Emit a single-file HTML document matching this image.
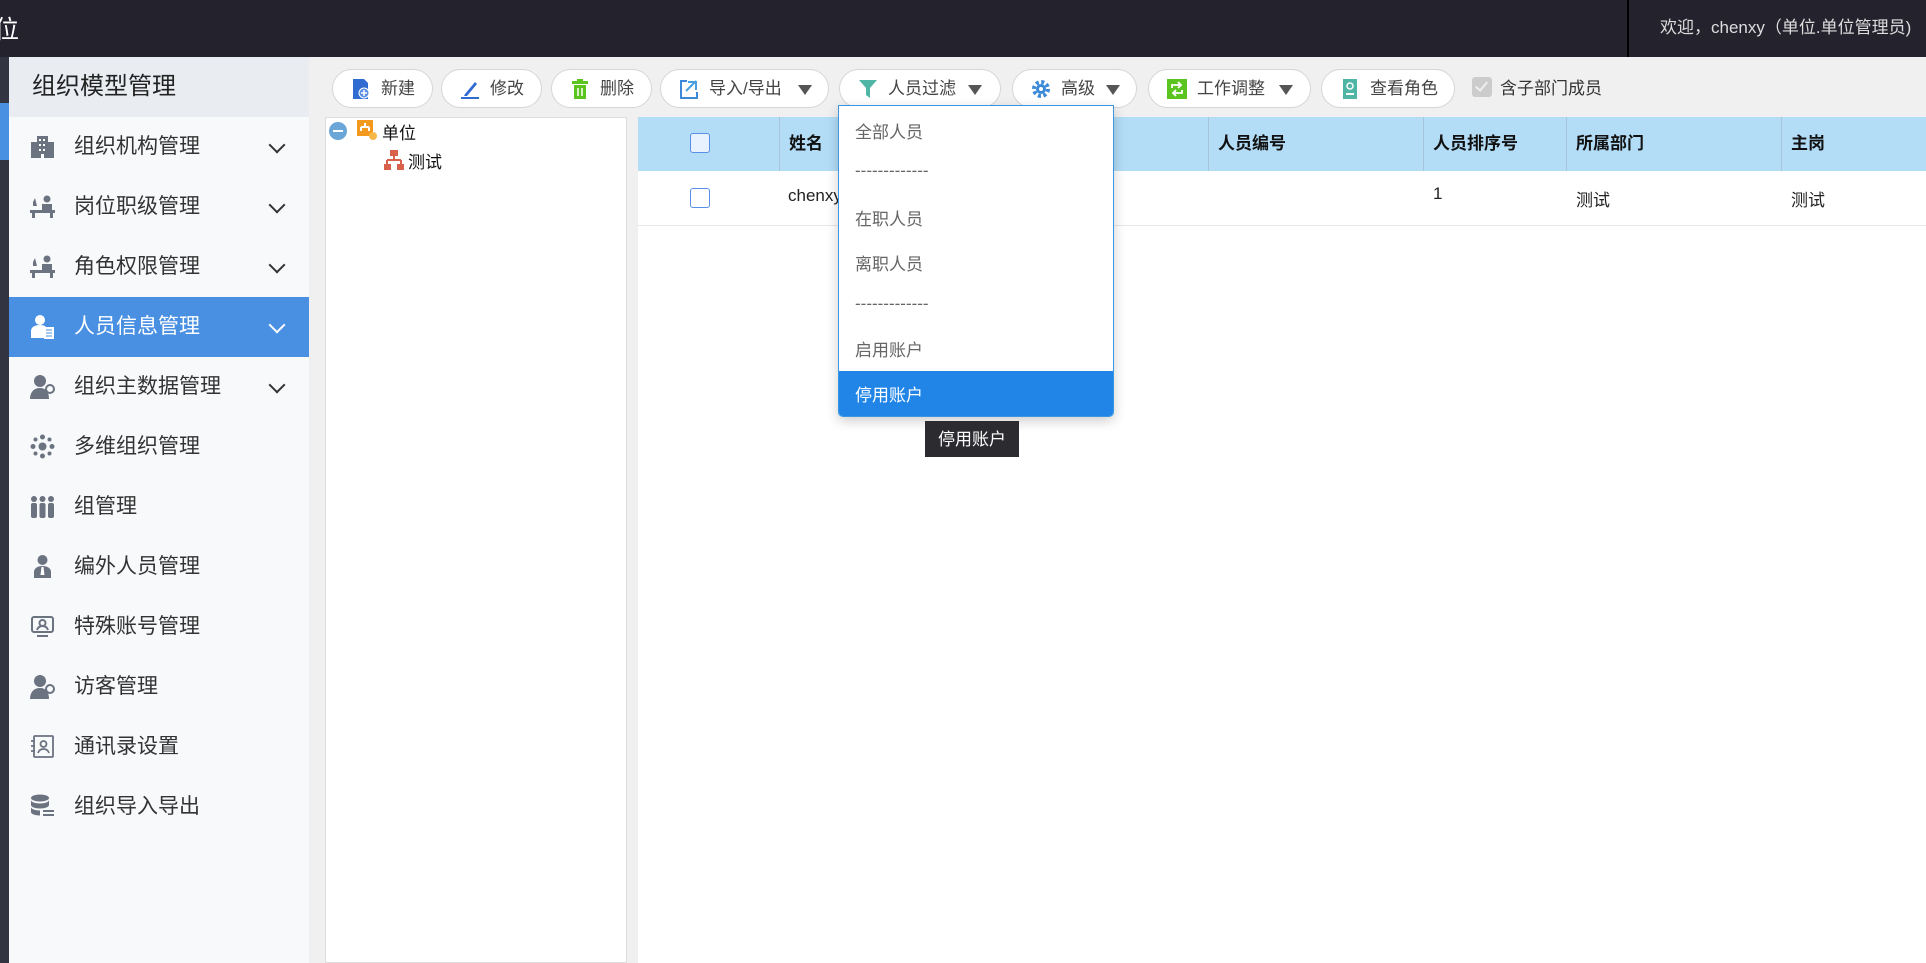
<!DOCTYPE html>
<html><head><meta charset="utf-8"><style>
*{margin:0;padding:0;box-sizing:border-box}
body{width:1926px;height:963px;overflow:hidden;background:#f0f0f0;font-family:"Liberation Sans","Noto Sans CJK SC",sans-serif;position:relative}
.abs{position:absolute}
#top{left:0;top:0;width:1926px;height:57px;background:#23222d}
#strip{left:0;top:57px;width:9px;height:906px;background:#323442}
#side{left:9px;top:57px;width:300px;height:906px;background:#f7f9fb}
.mh{left:9px;top:57px;width:300px;height:60px;background:#e9edf2;font-size:24px;color:#222;line-height:60px;padding-left:23px}
.mi{left:9px;width:300px;height:60px;font-size:21px;color:#333;line-height:60px}
.mi .ic{position:absolute;left:21px;top:17px;width:25px;height:25px}
.mi .t{position:absolute;left:65px}
.mi .ch{position:absolute;left:262px;top:22px;width:12px;height:12px;border-right:2.5px solid #333;border-bottom:2.5px solid #333;transform:rotate(45deg)}
.mi.act{background:#4a90e2;color:#fff}
.mi.act .ch{border-color:#fff}
.btn{top:69px;height:39px;background:#fff;border:1px solid #d6d6d6;border-radius:20px;font-size:17px;color:#444;line-height:37px}
.btn .i{position:absolute;left:18px;top:9px;width:20px;height:20px}
.btn .t{position:absolute;left:48px}
.tri{position:absolute;top:15px;width:0;height:0;border-left:7px solid transparent;border-right:7px solid transparent;border-top:10px solid #555}
.th{top:117px;height:54px;background:#b3dcf7;font-weight:bold;font-size:17px;color:#111;line-height:54px;padding-left:9px;border-left:1px solid #a8c4dc}
.td{top:171px;height:55px;background:#fff;font-size:17px;color:#222;line-height:55px;padding-left:9px;border-bottom:1px solid #e6e6e6}
.dd{font-size:17px;color:#666;left:855px;position:absolute}
</style></head><body>
<div id="top" class="abs"></div>
<div class="abs" style="left:-6px;top:10px;font-size:25px;color:#fff">位</div>
<div class="abs" style="left:1627px;top:0;width:2px;height:57px;background:#000"></div>
<div class="abs" style="left:1660px;top:13px;font-size:17px;color:#ddd;white-space:nowrap">欢迎，chenxy（单位.单位管理员)</div>
<div id="strip" class="abs"></div>
<div class="abs" style="left:0;top:103px;width:9px;height:57px;background:#4a90e2"></div>
<div id="side" class="abs"></div>
<div class="abs mh">组织模型管理</div>

<div class="abs mi" style="top:117px"><svg class="ic" viewBox="0 0 25 25"><rect x="7" y="2" width="11" height="22" fill="#6b7280"/><rect x="1" y="8" width="6" height="16" fill="#6b7280"/><rect x="18" y="8" width="6" height="16" fill="#6b7280"/><g fill="#fff"><rect x="9" y="5" width="2" height="2"/><rect x="13" y="5" width="2" height="2"/><rect x="9" y="10" width="2" height="2"/><rect x="13" y="10" width="2" height="2"/><rect x="9" y="15" width="2" height="2"/><rect x="13" y="15" width="2" height="2"/><rect x="11" y="20" width="3" height="4"/></g></svg><span class="t">组织机构管理</span><span class="ch"></span></div>
<div class="abs mi" style="top:177px"><svg class="ic" viewBox="0 0 25 25" fill="#6b7280"><circle cx="17" cy="5" r="3.5"/><path d="M12 10h10v7H12z"/><path d="M0 16h25v3H0zM2 19h3v5H2zM20 19h3v5h-3zM3 8l2-4 2 8H3z"/></svg><span class="t">岗位职级管理</span><span class="ch"></span></div>
<div class="abs mi" style="top:237px"><svg class="ic" viewBox="0 0 25 25" fill="#6b7280"><circle cx="17" cy="5" r="3.5"/><path d="M12 10h10v7H12z"/><path d="M0 16h25v3H0zM2 19h3v5H2zM20 19h3v5h-3zM3 8l2-4 2 8H3z"/></svg><span class="t">角色权限管理</span><span class="ch"></span></div>
<div class="abs mi act" style="top:297px"><svg class="ic" viewBox="0 0 25 25" fill="#fff"><circle cx="10" cy="6" r="5"/><path d="M1 24v-7c0-4 4-6 9-6s6 2 6 2v11z"/><rect x="14" y="13" width="10" height="12" fill="#fff"/><path d="M16 16h6M16 19h6M16 22h6" stroke="#4a90e2"/></svg><span class="t">人员信息管理</span><span class="ch"></span></div>
<div class="abs mi" style="top:357px"><svg class="ic" viewBox="0 0 25 25" fill="#6b7280"><circle cx="10" cy="7" r="6"/><path d="M0 25c0-7 4-11 10-11s9 4 9 11z"/><circle cx="20" cy="15" r="4" fill="none" stroke="#6b7280" stroke-width="2"/></svg><span class="t">组织主数据管理</span><span class="ch"></span></div>
<div class="abs mi" style="top:417px"><svg class="ic" viewBox="0 0 25 25" fill="#6b7280"><circle cx="12.5" cy="12.5" r="4"/><circle cx="12.5" cy="3" r="2.5"/><circle cx="12.5" cy="22" r="2.5"/><circle cx="3" cy="12.5" r="2.5"/><circle cx="22" cy="12.5" r="2.5"/><circle cx="5.5" cy="5.5" r="2"/><circle cx="19.5" cy="5.5" r="2"/><circle cx="5.5" cy="19.5" r="2"/><circle cx="19.5" cy="19.5" r="2"/></svg><span class="t">多维组织管理</span></div>
<div class="abs mi" style="top:477px"><svg class="ic" viewBox="0 0 25 25" fill="#6b7280"><circle cx="4" cy="5" r="3"/><circle cx="12.5" cy="5" r="3"/><circle cx="21" cy="5" r="3"/><rect x="1" y="9" width="6" height="15" rx="2"/><rect x="9.5" y="9" width="6" height="15" rx="2"/><rect x="18" y="9" width="6" height="15" rx="2"/></svg><span class="t">组管理</span></div>
<div class="abs mi" style="top:537px"><svg class="ic" viewBox="0 0 25 25" fill="#6b7280"><circle cx="12.5" cy="6" r="5"/><path d="M4 24v-6c0-4 4-6 8.5-6s8.5 2 8.5 6v6z"/><path d="M11.5 13h2l1 8h-4z" fill="#fff"/></svg><span class="t">编外人员管理</span></div>
<div class="abs mi" style="top:597px"><svg class="ic" viewBox="0 0 25 25" fill="none" stroke="#6b7280" stroke-width="2"><rect x="2" y="3" width="21" height="15" rx="2"/><circle cx="12.5" cy="9" r="3"/><path d="M7 16c1-3 3-4 5.5-4s4.5 1 5.5 4M7 22h11"/></svg><span class="t">特殊账号管理</span></div>
<div class="abs mi" style="top:657px"><svg class="ic" viewBox="0 0 25 25" fill="#6b7280"><circle cx="10" cy="7" r="6"/><path d="M0 25c0-7 4-11 10-11s9 4 9 11z"/><circle cx="20" cy="15" r="4" fill="none" stroke="#6b7280" stroke-width="2"/></svg><span class="t">访客管理</span></div>
<div class="abs mi" style="top:717px"><svg class="ic" viewBox="0 0 25 25" fill="none" stroke="#6b7280" stroke-width="1.8"><rect x="4" y="2" width="19" height="21" rx="1"/><circle cx="13.5" cy="10" r="3"/><path d="M8 19c1-3 3-4 5.5-4s4.5 1 5.5 4M1 7h4M1 12h4M1 17h4"/></svg><span class="t">通讯录设置</span></div>
<div class="abs mi" style="top:777px"><svg class="ic" viewBox="0 0 25 25" fill="#6b7280"><ellipse cx="10" cy="4" rx="9" ry="3.5"/><path d="M1 6v5c0 2 4 3.5 9 3.5s9-1.5 9-3.5V6c0 2-4 3.5-9 3.5S1 8 1 6zM1 13v5c0 2 4 3.5 9 3.5v-5c-5 0-9-1.5-9-3.5z"/><path d="M13 17h11M13 21h11" stroke="#6b7280" stroke-width="2"/></svg><span class="t">组织导入导出</span></div>

<!-- toolbar -->
<div class="abs btn" style="left:332px;width:101px"><svg class="i" viewBox="0 0 20 20"><path d="M2 0h11l4 4v16H2z" fill="#2f6bd1"/><circle cx="13" cy="14" r="5" fill="#5b8fe0" stroke="#fff"/><path d="M13 11v6M10 14h6" stroke="#fff" stroke-width="1.5"/></svg><span class="t">新建</span></div>
<div class="abs btn" style="left:441px;width:101px"><svg class="i" viewBox="0 0 20 20"><path d="M5 15L15 3l2 2L7 17H4z" fill="#2f6bd1"/><rect x="1" y="18" width="18" height="2" fill="#2f6bd1"/></svg><span class="t">修改</span></div>
<div class="abs btn" style="left:551px;width:101px"><svg class="i" viewBox="0 0 20 20" fill="#5cc41f"><rect x="2" y="2" width="16" height="3"/><rect x="7" y="0" width="6" height="3"/><path d="M4 6h12v14H4z"/><path d="M8 9v8M12 9v8" stroke="#fff" stroke-width="1.5"/></svg><span class="t">删除</span></div>
<div class="abs btn" style="left:660px;width:169px"><svg class="i" viewBox="0 0 20 20" fill="none" stroke="#3b8ad9" stroke-width="2"><path d="M8 2H2v17h16v-6"/><path d="M7 12l10-10M9 3h8v8" stroke="#4a9fe0"/></svg><span class="t">导入/导出</span><span class="tri" style="left:137px"></span></div>
<div class="abs btn" style="left:839px;width:162px"><svg class="i" viewBox="0 0 20 20"><path d="M1 1h18l-7 8v10l-4-3V9z" fill="#4fb6a6"/></svg><span class="t">人员过滤</span><span class="tri" style="left:128px"></span></div>
<div class="abs btn" style="left:1012px;width:125px"><svg class="i" viewBox="0 0 20 20"><circle cx="10" cy="10" r="7" fill="none" stroke="#3b8ad9" stroke-width="4" stroke-dasharray="3 2.5"/><circle cx="10" cy="10" r="5" fill="#3b8ad9"/><circle cx="10" cy="10" r="2" fill="#fff"/></svg><span class="t">高级</span><span class="tri" style="left:93px"></span></div>
<div class="abs btn" style="left:1148px;width:163px"><svg class="i" viewBox="0 0 20 20"><rect width="20" height="20" fill="#5cc41f"/><path d="M5 9V6h9M11 3l3 3-3 3M15 11v3H6M9 17l-3-3 3-3" fill="none" stroke="#fff" stroke-width="1.8"/></svg><span class="t">工作调整</span><span class="tri" style="left:130px"></span></div>
<div class="abs btn" style="left:1321px;width:134px"><svg class="i" viewBox="0 0 20 20"><rect x="3" width="14" height="20" fill="#4fb6a6"/><circle cx="10" cy="7" r="3" fill="none" stroke="#fff" stroke-width="1.5"/><path d="M6 15h8" stroke="#fff" stroke-width="2"/></svg><span class="t">查看角色</span></div>
<div class="abs" style="left:1472px;top:77px;width:20px;height:20px;background:#ccc;border-radius:3px"></div>
<div class="abs" style="left:1478px;top:79px;width:7px;height:12px;border-right:2px solid #eee;border-bottom:2px solid #eee;transform:rotate(40deg)"></div>
<div class="abs" style="left:1500px;top:74px;font-size:17px;color:#333">含子部门成员</div>

<!-- tree -->
<div class="abs" style="left:325px;top:117px;width:302px;height:846px;background:#fff;border:1px solid #ddd"></div>
<div class="abs" style="left:329px;top:122px;width:18px;height:18px;border-radius:50%;background:#6aa6d8"></div>
<div class="abs" style="left:333px;top:130px;width:10px;height:2px;background:#fff"></div>
<svg class="abs" style="left:357px;top:120px" width="20" height="20" viewBox="0 0 20 20"><rect width="16" height="16" fill="#f39a1e"/><path d="M8 3v4M4 7h8M4 7v4M12 7v4" stroke="#fff" stroke-width="2"/><circle cx="16" cy="16" r="4" fill="#f7b84a"/></svg>
<div class="abs" style="left:382px;top:119px;font-size:17px;color:#111">单位</div>
<svg class="abs" style="left:384px;top:150px" width="20" height="20" viewBox="0 0 20 20" fill="#d9614b"><rect x="6" y="0" width="8" height="6"/><rect x="0" y="14" width="7" height="6"/><rect x="13" y="14" width="7" height="6"/><path d="M10 6v4M3 10h14M3 10v4M17 10v4" stroke="#d9614b" stroke-width="2" fill="none"/></svg>
<div class="abs" style="left:408px;top:148px;font-size:17px;color:#111">测试</div>

<!-- grid -->
<div class="abs" style="left:638px;top:117px;width:1288px;height:846px;background:#fff"></div>
<div class="abs th" style="left:638px;width:141px;border-left:none"></div>
<div class="abs th" style="left:779px;width:429px">姓名</div>
<div class="abs th" style="left:1208px;width:215px">人员编号</div>
<div class="abs th" style="left:1423px;width:143px">人员排序号</div>
<div class="abs th" style="left:1566px;width:215px">所属部门</div>
<div class="abs th" style="left:1781px;width:145px">主岗</div>
<div class="abs" style="left:690px;top:133px;width:20px;height:20px;border:1.5px solid #5b8ee8;border-radius:3px;background:#e8f2ff"></div>
<div class="abs td" style="left:638px;width:1288px"></div>
<div class="abs" style="left:690px;top:188px;width:20px;height:20px;border:1.5px solid #5b8ee8;border-radius:3px;background:#fff"></div>
<div class="abs" style="left:788px;top:186px;font-size:17px;color:#222">chenxy</div>
<div class="abs" style="left:1433px;top:184px;font-size:17px;color:#222">1</div>
<div class="abs" style="left:1576px;top:186px;font-size:17px;color:#222">测试</div>
<div class="abs" style="left:1791px;top:186px;font-size:17px;color:#222">测试</div>

<!-- dropdown -->
<div class="abs" style="left:838px;top:105px;width:276px;height:312px;background:#fff;border:1px solid #3b97e3;border-radius:0 0 5px 5px;box-shadow:0 4px 12px rgba(0,0,0,.2);overflow:hidden">
<div style="position:absolute;left:0;top:265px;width:276px;height:47px;background:#2185e8"></div>
</div>
<div class="dd" style="top:118px">全部人员</div>
<div class="dd" style="top:161px">-------------</div>
<div class="dd" style="top:205px">在职人员</div>
<div class="dd" style="top:250px">离职人员</div>
<div class="dd" style="top:294px">-------------</div>
<div class="dd" style="top:336px">启用账户</div>
<div class="dd" style="top:381px;color:#fff">停用账户</div>
<div class="abs" style="left:925px;top:421px;width:94px;height:36px;background:#2b2b30;color:#fff;font-size:17px;line-height:38px;text-align:center">停用账户</div>
</body></html>
